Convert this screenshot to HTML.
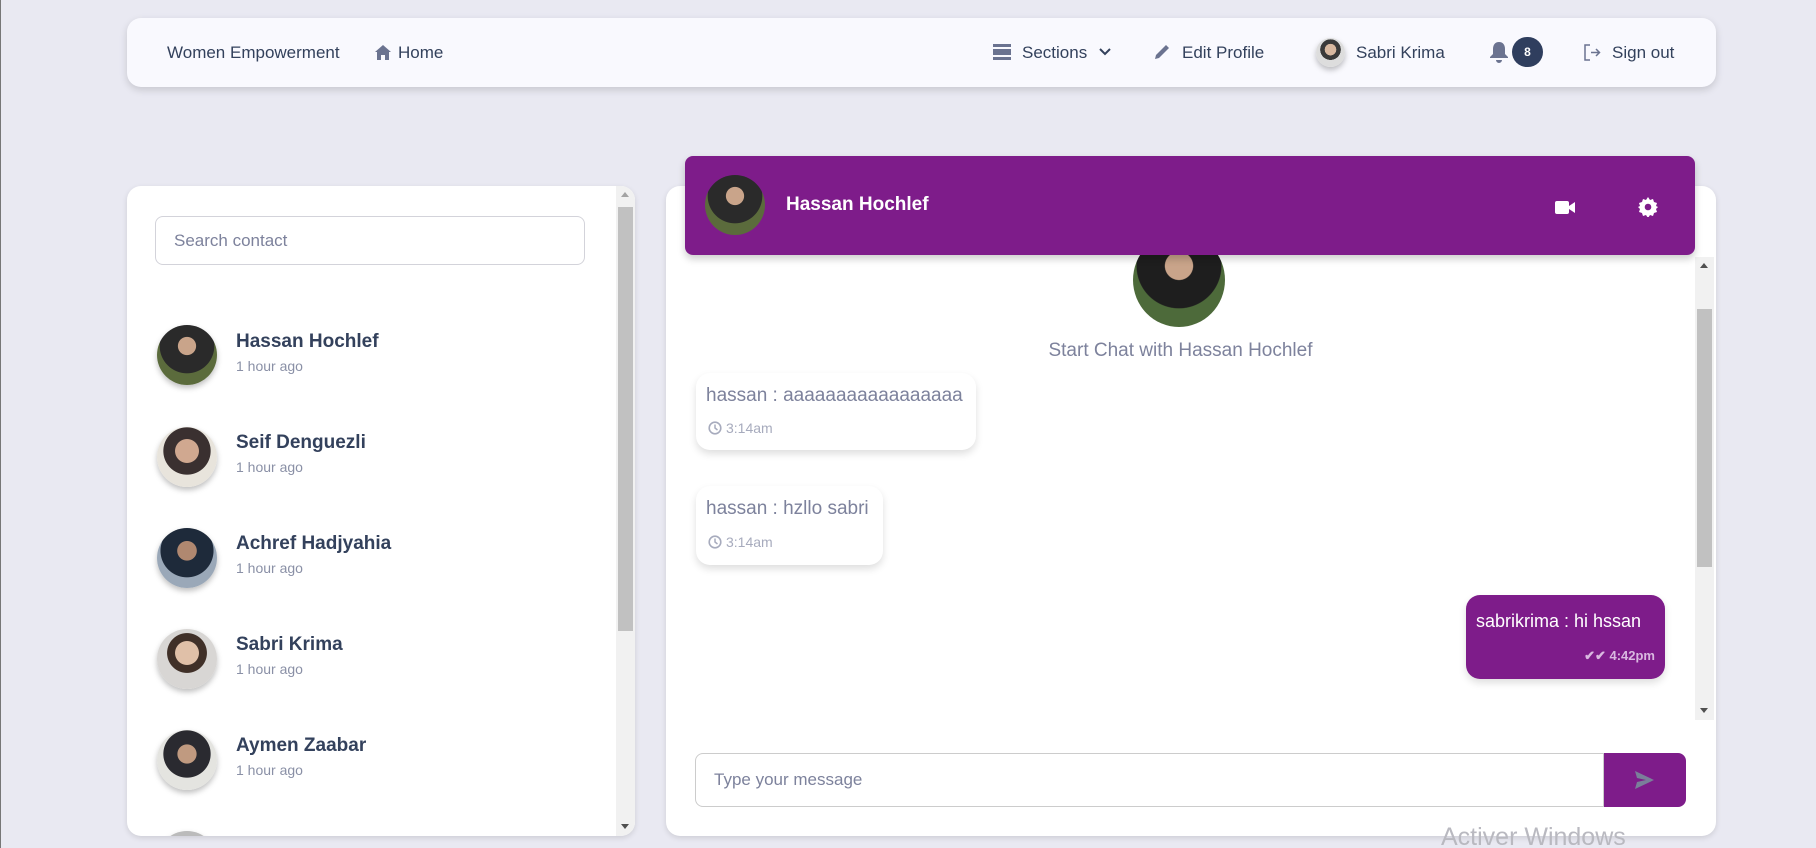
<!DOCTYPE html>
<html><head><meta charset="utf-8"><style>
*{box-sizing:border-box;margin:0;padding:0}
html{overflow:hidden;width:1816px;height:848px}
body{width:1816px;height:848px;overflow:hidden;background:#e9e9f2;font-family:"Liberation Sans",sans-serif;position:relative;border-left:1px solid #777}
.abs{position:absolute}
.nav{left:126px;top:18px;width:1589px;height:69px;background:#f9f9fe;border-radius:14px;box-shadow:0 3px 8px rgba(0,0,0,.15)}
.nt{position:absolute;top:0;line-height:69px;font-size:17px;color:#33415c}
.card{background:#fff;border-radius:14px;box-shadow:0 2px 6px rgba(0,0,0,.12)}
.av{position:absolute;border-radius:50%;background:radial-gradient(circle at 50% 35%,#c9a48a 0 18%,#2a2a2a 19% 55%,#5b6b3c 56%);box-shadow:0 3px 6px rgba(0,0,0,.25)}
.name{position:absolute;left:109px;font-size:19px;font-weight:bold;color:#33415c}
.ago{position:absolute;left:109px;font-size:14px;color:#8a90a6}
.bub{position:absolute;background:#fff;border-radius:14px;box-shadow:0 4px 8px rgba(0,0,0,.13)}
.mt{position:absolute;left:10px;top:12px;font-size:19px;color:#7d829c;white-space:nowrap}
.tm{position:absolute;left:16px;font-size:14px;color:#a7abbd;white-space:nowrap}
</style></head><body>
<div class="abs nav">
 <div class="nt" style="left:40px">Women Empowerment</div>
 <svg class="abs" style="left:248px;top:27px" width="16" height="15" viewBox="0 0 16 15"><path d="M8 0L0 7h2v8h4v-5h4v5h4V7h2z" fill="#6b7390"/></svg>
 <div class="nt" style="left:271px">Home</div>
 <svg class="abs" style="left:866px;top:26px" width="18" height="16" viewBox="0 0 18 16"><rect y="0" width="18" height="3" fill="#6b7390"/><rect y="5" width="18" height="6" fill="#6b7390"/><rect y="13" width="18" height="3" fill="#6b7390"/></svg>
 <div class="nt" style="left:895px">Sections</div>
 <svg class="abs" style="left:972px;top:30px" width="12" height="8" viewBox="0 0 12 8"><path d="M1 1l5 5 5-5" stroke="#33415c" stroke-width="2" fill="none"/></svg>
 <svg class="abs" style="left:1027px;top:26px" width="16" height="16" viewBox="0 0 16 16"><path d="M1 15l1-4L12 1l3 3L5 14z" fill="#6b7390"/></svg>
 <div class="nt" style="left:1055px">Edit Profile</div>
 <div class="av" style="left:1189px;top:20px;width:29px;height:29px;background:radial-gradient(circle at 50% 40%,#d8b8a0 0 25%,#3a3a3a 26% 45%,#ddd 46%)"></div>
 <div class="nt" style="left:1229px">Sabri Krima</div>
 <svg class="abs" style="left:1363px;top:24px" width="18" height="21" viewBox="0 0 18 21"><path d="M9 0c4 0 6 3 6 7v5l3 3v1H0v-1l3-3V7c0-4 2-7 6-7zM6 18h6a3 3 0 0 1-6 0z" fill="#6b7390"/></svg>
 <div class="abs" style="left:1385px;top:19px;width:31px;height:30px;border-radius:15px;background:#2f3e5e;color:#fff;font-size:12px;font-weight:bold;text-align:center;line-height:30px">8</div>
 <svg class="abs" style="left:1457px;top:26px" width="17" height="17" viewBox="0 0 17 17"><path d="M6 1H1v15h5M7 8.5h8M12 5l3.5 3.5L12 12" stroke="#6b7390" stroke-width="1.5" fill="none"/></svg>
 <div class="nt" style="left:1485px">Sign out</div>
</div>

<div class="abs card" style="left:126px;top:186px;width:508px;height:650px;overflow:hidden">
 <div class="abs" style="left:489px;top:0;width:19px;height:650px;background:#f1f1f1"></div>
 <div class="abs" style="left:491px;top:21px;width:15px;height:424px;background:#c1c1c1"></div>
 <div class="abs" style="left:494px;top:6px;width:0;height:0;border-left:4px solid transparent;border-right:4px solid transparent;border-bottom:5px solid #a3a3a3"></div>
 <div class="abs" style="left:494px;top:638px;width:0;height:0;border-left:4px solid transparent;border-right:4px solid transparent;border-top:5px solid #505050"></div>
 <div class="abs" style="left:28px;top:30px;width:430px;height:49px;border:1px solid #d3d3da;border-radius:8px;font-size:17px;color:#7d829c;line-height:47px;padding-left:18px">Search contact</div>
 <div class="av" style="left:30px;top:139px;width:60px;height:60px"></div>
 <div class="name" style="top:145px">Hassan Hochlef</div><div class="ago" style="top:172px">1 hour ago</div>
 <div class="av" style="left:30px;top:241px;width:60px;height:60px;background:radial-gradient(circle at 50% 40%,#d0a890 0 25%,#3a3030 26% 50%,#e8e4dc 51%)"></div>
 <div class="name" style="top:246px">Seif Denguezli</div><div class="ago" style="top:273px">1 hour ago</div>
 <div class="av" style="left:30px;top:342px;width:60px;height:60px;background:radial-gradient(circle at 50% 38%,#b08870 0 20%,#1e2a3a 21% 55%,#9aa8b8 56%)"></div>
 <div class="name" style="top:347px">Achref Hadjyahia</div><div class="ago" style="top:374px">1 hour ago</div>
 <div class="av" style="left:30px;top:443px;width:60px;height:60px;background:radial-gradient(circle at 50% 40%,#e0c0a8 0 25%,#403028 26% 42%,#d8d6d4 43%)"></div>
 <div class="name" style="top:448px">Sabri Krima</div><div class="ago" style="top:475px">1 hour ago</div>
 <div class="av" style="left:30px;top:544px;width:60px;height:60px;background:radial-gradient(circle at 50% 40%,#c09a80 0 20%,#2a2a30 21% 50%,#e4e4e0 51%)"></div>
 <div class="name" style="top:549px">Aymen Zaabar</div><div class="ago" style="top:576px">1 hour ago</div>
 <div class="av" style="left:30px;top:645px;width:60px;height:60px;background:#bbb"></div>
</div>

<div class="abs card" style="left:665px;top:186px;width:1050px;height:650px;overflow:hidden">
 <div class="abs" style="left:1029px;top:71px;width:19px;height:463px;background:#f1f1f1"></div>
 <div class="abs" style="left:1031px;top:123px;width:15px;height:258px;background:#c1c1c1"></div>
 <div class="abs" style="left:1034px;top:77px;width:0;height:0;border-left:4px solid transparent;border-right:4px solid transparent;border-bottom:5px solid #505050"></div>
 <div class="abs" style="left:1034px;top:522px;width:0;height:0;border-left:4px solid transparent;border-right:4px solid transparent;border-top:5px solid #505050"></div>
 <div class="abs" style="left:467px;top:47px;width:92px;height:94px;border-radius:50%;background:radial-gradient(circle at 50% 35%,#c9a48a 0 18%,#1e1e1e 19% 55%,#4d6a3a 56%)"></div>
 <div class="abs" style="left:0;width:1029px;top:154px;text-align:center;font-size:19px;color:#7d829c">Start Chat with Hassan Hochlef</div>
 <div class="bub" style="left:30px;top:187px;width:280px;height:77px"><div class="mt">hassan : aaaaaaaaaaaaaaaaa</div>
  <svg class="abs" style="left:12px;top:48px" width="14" height="14" viewBox="0 0 14 14"><circle cx="7" cy="7" r="5.8" stroke="#a7abbd" stroke-width="1.6" fill="none"/><path d="M7 3.5V7l2.5 2" stroke="#a7abbd" stroke-width="1.5" fill="none"/></svg>
  <div class="tm" style="left:30px;top:47px">3:14am</div></div>
 <div class="bub" style="left:30px;top:300px;width:187px;height:79px"><div class="mt">hassan : hzllo sabri</div>
  <svg class="abs" style="left:12px;top:49px" width="14" height="14" viewBox="0 0 14 14"><circle cx="7" cy="7" r="5.8" stroke="#a7abbd" stroke-width="1.6" fill="none"/><path d="M7 3.5V7l2.5 2" stroke="#a7abbd" stroke-width="1.5" fill="none"/></svg>
  <div class="tm" style="left:30px;top:48px">3:14am</div></div>
 <div class="bub" style="left:800px;top:409px;width:199px;height:84px;background:#7e1c8a"><div class="mt" style="left:10px;top:16px;color:#fff;font-size:18px">sabrikrima : hi hssan</div>
  <div class="tm" style="left:auto;right:10px;top:53px;color:#d9b8e0;font-weight:bold;font-size:13px">✔✔ 4:42pm</div></div>
 <div class="abs" style="left:29px;top:567px;width:909px;height:54px;border:1px solid #ccc;border-radius:8px 0 0 8px;font-size:17px;color:#7d829c;line-height:52px;padding-left:18px">Type your message</div>
 <div class="abs" style="left:938px;top:567px;width:82px;height:54px;background:#7e1c8a;border-radius:0 8px 8px 0"></div>
 <svg class="abs" style="left:969px;top:585px" width="19" height="18" viewBox="0 0 19 18"><path d="M0 0l19 9L0 18l2-7 9-2-9-2z" fill="#7a7f9a"/></svg>
</div>

<div class="abs" style="left:684px;top:156px;width:1010px;height:99px;background:#7e1c8a;border-radius:8px;box-shadow:0 4px 8px rgba(0,0,0,.2)">
 <div class="av" style="left:20px;top:19px;width:60px;height:60px;box-shadow:none"></div>
 <div class="abs" style="left:101px;top:38px;font-size:19px;font-weight:bold;color:#fff">Hassan Hochlef</div>
 <svg class="abs" style="left:870px;top:45px" width="20" height="13" viewBox="0 0 20 13"><rect width="14" height="13" rx="2" fill="#fff"/><path d="M14 5l6-4v11l-6-4z" fill="#fff"/></svg>
 <svg class="abs" style="left:953px;top:41px" width="20" height="20" viewBox="0 0 20 20"><path d="M10 0l2 3 3-1 1 3 3 1-1 3 2 1-2 2 1 3-3 1-1 3-3-1-2 3-2-3-3 1-1-3-3-1 1-3-2-2 2-1-1-3 3-1 1-3 3 1z" fill="#fff"/><circle cx="10" cy="10" r="3.3" fill="#7e1c8a"/></svg>
</div>
<div class="abs" style="left:1440px;top:822px;height:26px;overflow:hidden;font-size:25px;line-height:30px;color:#b9b9c0;white-space:nowrap">Activer Windows</div>
</body></html>
